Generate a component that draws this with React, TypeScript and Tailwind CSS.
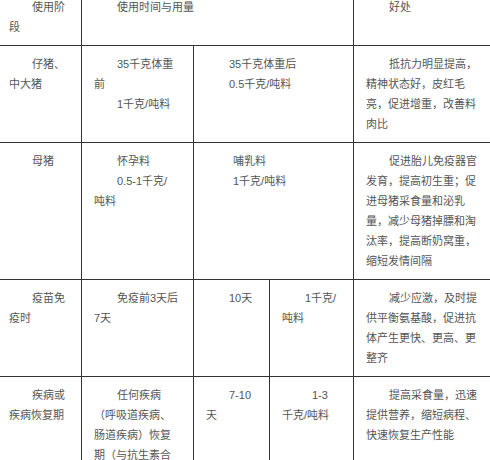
type Para = { lines: string[]; indent?: string };
type Cell = { span?: number; paras: Para[] };

const p = (lines: string[], indent?: string): Para => ({ lines, indent });

const ROWS: Cell[][] = [
  [
    { paras: [p(['使用阶', '段'])] },
    { span: 3, paras: [p(['使用时间与用量'])] },
    { paras: [p(['好处'])] },
  ],
  [
    { paras: [p(['仔猪、', '中大猪'])] },
    { paras: [p(['35千克体重', '前']), p(['1千克/吨料'])] },
    { span: 2, paras: [p(['35千克体重后']), p(['0.5千克/吨料'])] },
    { paras: [p(['抵抗力明显提高，', '精神状态好，皮红毛', '亮，促进增重，改善料', '肉比'])] },
  ],
  [
    { paras: [p(['母猪'])] },
    { paras: [p(['怀孕料']), p(['0.5-1千克/', '吨料'])] },
    { span: 2, paras: [p(['哺乳料'], 'indent-[27px]'), p(['1千克/吨料'], 'indent-[27px]')] },
    {
      paras: [
        p(['促进胎儿免疫器官', '发育，提高初生重；促', '进母猪采食量和泌乳', '量，减少母猪掉膘和淘', '汰率，提高断奶窝重，', '缩短发情间隔']),
      ],
    },
  ],
  [
    { paras: [p(['疫苗免', '疫时'])] },
    { paras: [p(['免疫前3天后', '7天'])] },
    { paras: [p(['10天'])] },
    { paras: [p(['1千克/', '吨料'])] },
    { paras: [p(['减少应激，及时提', '供平衡氨基酸，促进抗', '体产生更快、更高、更', '整齐'])] },
  ],
  [
    { paras: [p(['疾病或', '疾病恢复期'])] },
    { paras: [p(['任何疾病', '（呼吸道疾病、', '肠道疾病）恢复', '期（与抗生素合', '用）'])] },
    { paras: [p(['7-10', '天'])] },
    { paras: [p(['1-3', '千克/吨料'], 'indent-[30px]')] },
    { paras: [p(['提高采食量，迅速', '提供营养，缩短病程、', '快速恢复生产性能'])] },
  ],
];

function Paragraph({ para }: { para: Para }) {
  return (
    <p className={`whitespace-nowrap ${para.indent ?? 'indent-[23px]'}`}>
      {para.lines.map((line, i) => (
        <span key={i}>
          {i > 0 && <br />}
          {line}
        </span>
      ))}
    </p>
  );
}

export default function App() {
  return (
    <div className="w-[490px] h-[460px] overflow-hidden bg-white">
      <table className="table-fixed border-collapse w-[507px] -ml-[4px] -mt-[12px] font-['Liberation_Sans','Noto_Sans_CJK_SC',sans-serif] text-[11px] leading-[20px] text-[#555]">
        <colgroup>
          <col className="w-[85px]" />
          <col className="w-[112px]" />
          <col className="w-[76px]" />
          <col className="w-[84px]" />
          <col className="w-[150px]" />
        </colgroup>
        <tbody>
          {ROWS.map((row, r) => (
            <tr key={r}>
              {row.map((cell, c) => (
                <td
                  key={c}
                  colSpan={cell.span}
                  className="border border-[#333] align-top pl-3 pr-2 pt-2 pb-2 overflow-hidden"
                >
                  {cell.paras.map((para, k) => (
                    <Paragraph key={k} para={para} />
                  ))}
                </td>
              ))}
            </tr>
          ))}
        </tbody>
      </table>
    </div>
  );
}
